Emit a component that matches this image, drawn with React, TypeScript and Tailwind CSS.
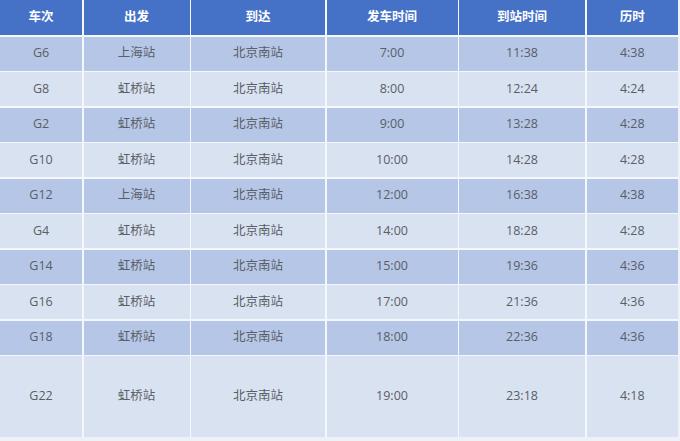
const headers = ["车次", "出发", "到达", "发车时间", "到站时间", "历时"];

const rows = [
  ["G6", "上海站", "北京南站", "7:00", "11:38", "4:38"],
  ["G8", "虹桥站", "北京南站", "8:00", "12:24", "4:24"],
  ["G2", "虹桥站", "北京南站", "9:00", "13:28", "4:28"],
  ["G10", "虹桥站", "北京南站", "10:00", "14:28", "4:28"],
  ["G12", "上海站", "北京南站", "12:00", "16:38", "4:38"],
  ["G4", "虹桥站", "北京南站", "14:00", "18:28", "4:28"],
  ["G14", "虹桥站", "北京南站", "15:00", "19:36", "4:36"],
  ["G16", "虹桥站", "北京南站", "17:00", "21:36", "4:36"],
  ["G18", "虹桥站", "北京南站", "18:00", "22:36", "4:36"],
  ["G22", "虹桥站", "北京南站", "19:00", "23:18", "4:18"],
];

export default function App() {
  return (
    <div
      className="w-[680px] h-[441px] bg-[#eef2f8] overflow-hidden"
      style={{ fontFamily: '"Open Sans", "Noto Sans CJK SC", sans-serif' }}
    >
      <div className="w-[678px] grid grid-cols-[82px_106px_134px_131px_126px_1fr] gap-[1.5px] bg-[#f4f8fc]">
        {headers.map((h) => (
          <div
            key={h}
            className="h-[35px] bg-[#4571c6] text-white text-[12.5px] font-bold flex items-center justify-center"
          >
            {h}
          </div>
        ))}
        {rows.map((r, i) =>
          r.map((c, j) => (
            <div
              key={`${i}-${j}`}
              className={`flex items-center justify-center text-[12.5px] text-[#5a5e66] ${
                i === rows.length - 1 ? "h-[81px]" : "h-[34px]"
              } ${i % 2 === 0 ? "bg-[#b5c6e7]" : "bg-[#d9e2f1]"}`}
            >
              {c}
            </div>
          ))
        )}
      </div>
    </div>
  );
}
